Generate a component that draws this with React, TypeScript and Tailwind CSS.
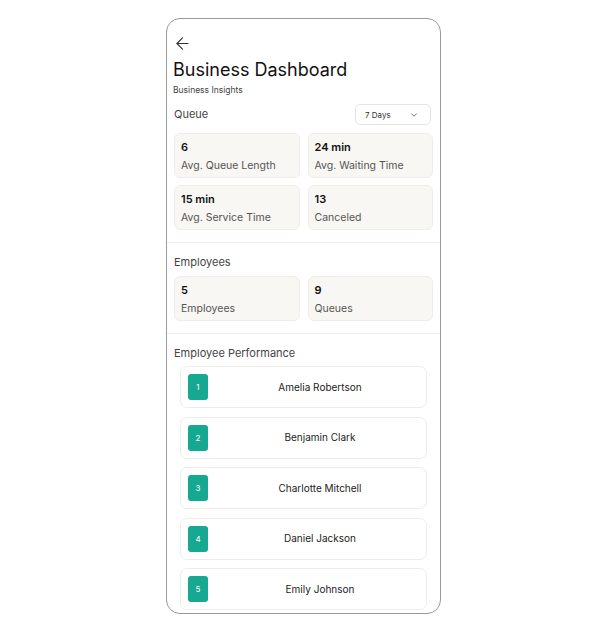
import { ChevronDown, ArrowLeft } from 'lucide-react';

const QUEUE_STATS = [
    { value: '6', label: 'Avg. Queue Length' },
    { value: '24 min', label: 'Avg. Waiting Time' },
    { value: '15 min', label: 'Avg. Service Time' },
    { value: '13', label: 'Canceled' },
];

const EMPLOYEE_STATS = [
    { value: '5', label: 'Employees' },
    { value: '9', label: 'Queues' },
];

const EMPLOYEES = ['Amelia Robertson', 'Benjamin Clark', 'Charlotte Mitchell', 'Daniel Jackson', 'Emily Johnson'];

function StatCard({ value, label }: { value: string; label: string }) {
    return (
        <div className='h-[45px] rounded-[6px] bg-[#f8f7f3] border border-[#efede8] px-[6px] pt-[6px]'>
            <div className='text-[11px] leading-[14px] font-semibold text-[#111]'>{value}</div>
            <div className='mt-[5px] text-[10.5px] leading-[14px] text-[#555]'>{label}</div>
        </div>
    );
}

export default function App() {
    return (
        <div className='min-h-screen bg-white flex justify-center pt-[18px]' style={{ fontFamily: 'Inter, "Noto Sans", sans-serif' }}>
            <div className='w-[275px] h-[596px] rounded-[14px] border border-[#9a9a9a] overflow-hidden bg-white flex flex-col'>
                {/* Header */}
                <div className='pt-[15px] px-[6px]'>
                    <ArrowLeft size={19} strokeWidth={1.4} className='text-[#333]' />
                    <h1 className='mt-[5px] text-[18px] leading-[24px] font-normal text-[#111]'>Business Dashboard</h1>
                    <p className='mt-[2px] text-[8.5px] leading-[12px] text-[#444]'>Business Insights</p>
                </div>

                {/* Queue */}
                <div className='px-[7px] pt-[8px] pb-[12px] border-b border-[#eeeeec]'>
                    <div className='flex items-center justify-between'>
                        <span className='text-[11px] text-[#444]'>Queue</span>
                        <button className='w-[76px] h-[21px] rounded-[5px] border border-[#e6e4df] flex items-center justify-between pl-[9px] pr-[11px] text-[8px] text-[#333] mr-[2px]'>
                            7 Days
                            <ChevronDown size={10} strokeWidth={1.8} className='text-[#444]' />
                        </button>
                    </div>
                    <div className='mt-[8px] grid grid-cols-2 gap-x-[8px] gap-y-[7px]'>
                        {QUEUE_STATS.map((s) => (
                            <StatCard key={s.label} {...s} />
                        ))}
                    </div>
                </div>

                {/* Employees */}
                <div className='px-[7px] pt-[12px] pb-[12px] border-b border-[#eeeeec]'>
                    <div className='text-[11px] leading-[14px] text-[#444]'>Employees</div>
                    <div className='mt-[7px] grid grid-cols-2 gap-x-[8px]'>
                        {EMPLOYEE_STATS.map((s) => (
                            <StatCard key={s.label} {...s} />
                        ))}
                    </div>
                </div>

                {/* Employee Performance */}
                <div className='px-[7px] pt-[12px]'>
                    <div className='text-[11px] leading-[14px] text-[#444]'>Employee Performance</div>
                    <div className='mt-[6px] mx-[6px] flex flex-col gap-[8.5px]'>
                        {EMPLOYEES.map((name, i) => (
                            <div key={name} className='h-[42px] shrink-0 rounded-[7px] border border-[#efede8] bg-white flex items-center pl-[7px]'>
                                <div className='w-[20px] h-[26px] rounded-[3px] bg-[#17a892] flex items-center justify-center text-[8px] text-white'>
                                    {i + 1}
                                </div>
                                <div className='flex-1 text-center text-[10px] text-[#222] pl-[6px]'>{name}</div>
                            </div>
                        ))}
                    </div>
                </div>
            </div>
        </div>
    );
}
